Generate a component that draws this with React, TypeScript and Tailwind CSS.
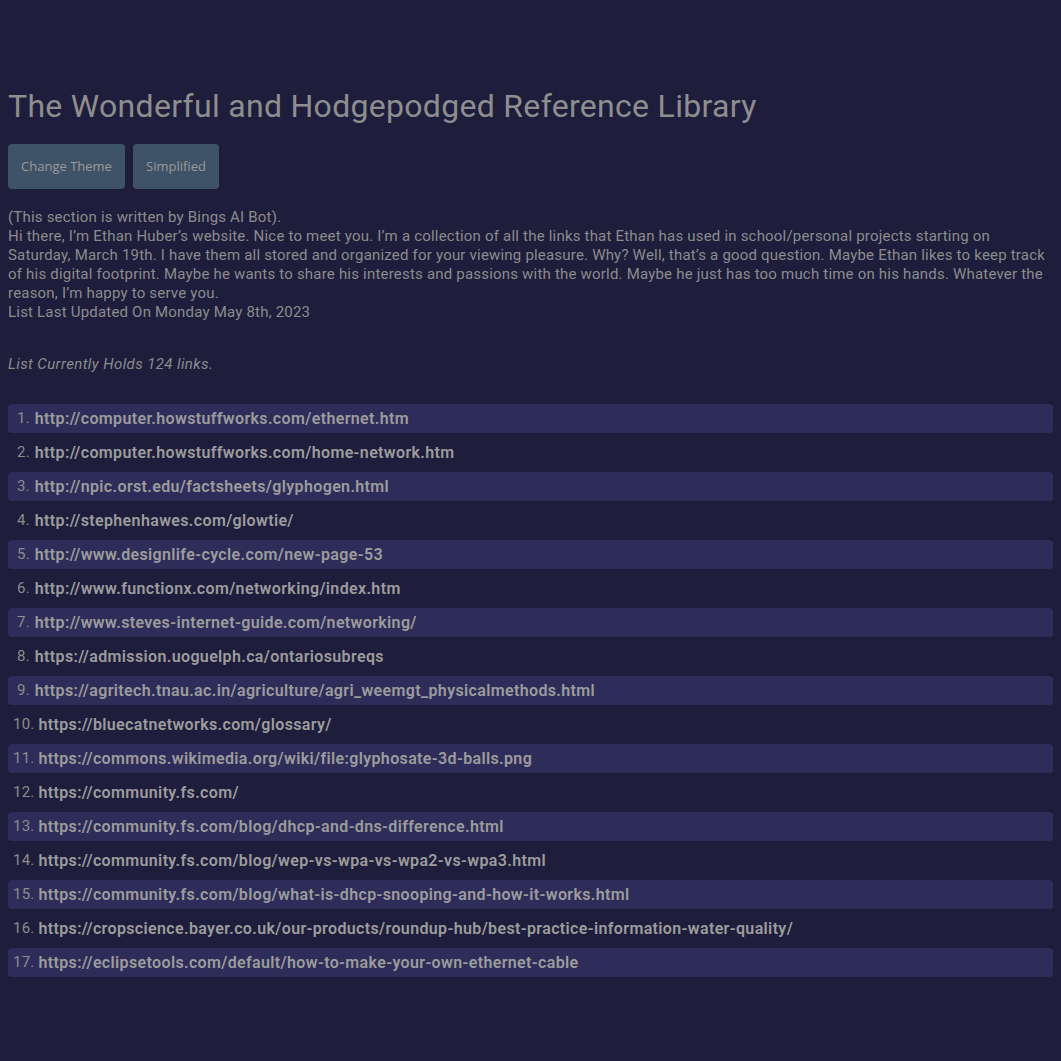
import React from "react";

const links = [
  "http://computer.howstuffworks.com/ethernet.htm",
  "http://computer.howstuffworks.com/home-network.htm",
  "http://npic.orst.edu/factsheets/glyphogen.html",
  "http://stephenhawes.com/glowtie/",
  "http://www.designlife-cycle.com/new-page-53",
  "http://www.functionx.com/networking/index.htm",
  "http://www.steves-internet-guide.com/networking/",
  "https://admission.uoguelph.ca/ontariosubreqs",
  "https://agritech.tnau.ac.in/agriculture/agri_weemgt_physicalmethods.html",
  "https://bluecatnetworks.com/glossary/",
  "https://commons.wikimedia.org/wiki/file:glyphosate-3d-balls.png",
  "https://community.fs.com/",
  "https://community.fs.com/blog/dhcp-and-dns-difference.html",
  "https://community.fs.com/blog/wep-vs-wpa-vs-wpa2-vs-wpa3.html",
  "https://community.fs.com/blog/what-is-dhcp-snooping-and-how-it-works.html",
  "https://cropscience.bayer.co.uk/our-products/roundup-hub/best-practice-information-water-quality/",
  "https://eclipsetools.com/default/how-to-make-your-own-ethernet-cable",
];

export default function App() {
  return (
    <div
      className="min-h-[1061px] bg-[#1e1d3c] px-2 pt-[84px] pb-2 text-[#8c8c8c]"
      style={{ fontFamily: "Roboto, 'Liberation Sans', sans-serif" }}
    >
      <h1 className="text-[32px] leading-[44px] tracking-[0.3px] text-[#8e8e8e]">
        The Wonderful and Hodgepodged Reference Library
      </h1>
      <div className="mt-[16px] flex gap-2">
        <button
          className="h-[45px] w-[117px] rounded-[4px] bg-[#3e5268] text-[13px] text-[#9a9a9a]"
          style={{ fontFamily: "'Open Sans', sans-serif" }}
        >
          Change Theme
        </button>
        <button
          className="h-[45px] w-[86px] rounded-[4px] bg-[#3e5268] text-[13px] text-[#9a9a9a]"
          style={{ fontFamily: "'Open Sans', sans-serif" }}
        >
          Simplified
        </button>
      </div>
      <div className="mt-[19px] pr-1 text-[15px] leading-[19px] tracking-[0.2px]">
        <p>(This section is written by Bings AI Bot).</p>
        <p>
          Hi there, I’m Ethan Huber’s website. Nice to meet you. I’m a collection of all the links that Ethan has used in
          school/personal projects starting on Saturday, March 19th. I have them all stored and organized for your viewing
          pleasure. Why? Well, that’s a good question. Maybe Ethan likes to keep track of his digital footprint. Maybe he
          wants to share his interests and passions with the world. Maybe he just has too much time on his hands. Whatever
          the reason, I’m happy to serve you.
        </p>
        <p>List Last Updated On Monday May 8th, 2023</p>
        <p className="mt-[33px] italic tracking-[0.4px]">List Currently Holds 124 links.</p>
      </div>
      <ol className="mt-[30px] flex flex-col gap-[5px] text-[15px]">
        {links.map((l, i) => (
          <li
            key={i}
            className={`flex h-[29px] items-center rounded-[4px] pr-[9px] ${i < 9 ? "pl-[9px]" : "pl-[5px]"} ${
              i % 2 === 0 ? "bg-[#2e2d5a]" : ""
            }`}
          >
            <span className="tracking-[0.2px] text-[#8c8c8c]">{i + 1}.</span>
            <span
              className={`${i < 9 ? "ml-[5px]" : "ml-[4px]"} text-[16px] font-semibold tracking-[0.36px] text-[#9c9c9c]`}
            >
              {l}
            </span>
          </li>
        ))}
      </ol>
    </div>
  );
}
